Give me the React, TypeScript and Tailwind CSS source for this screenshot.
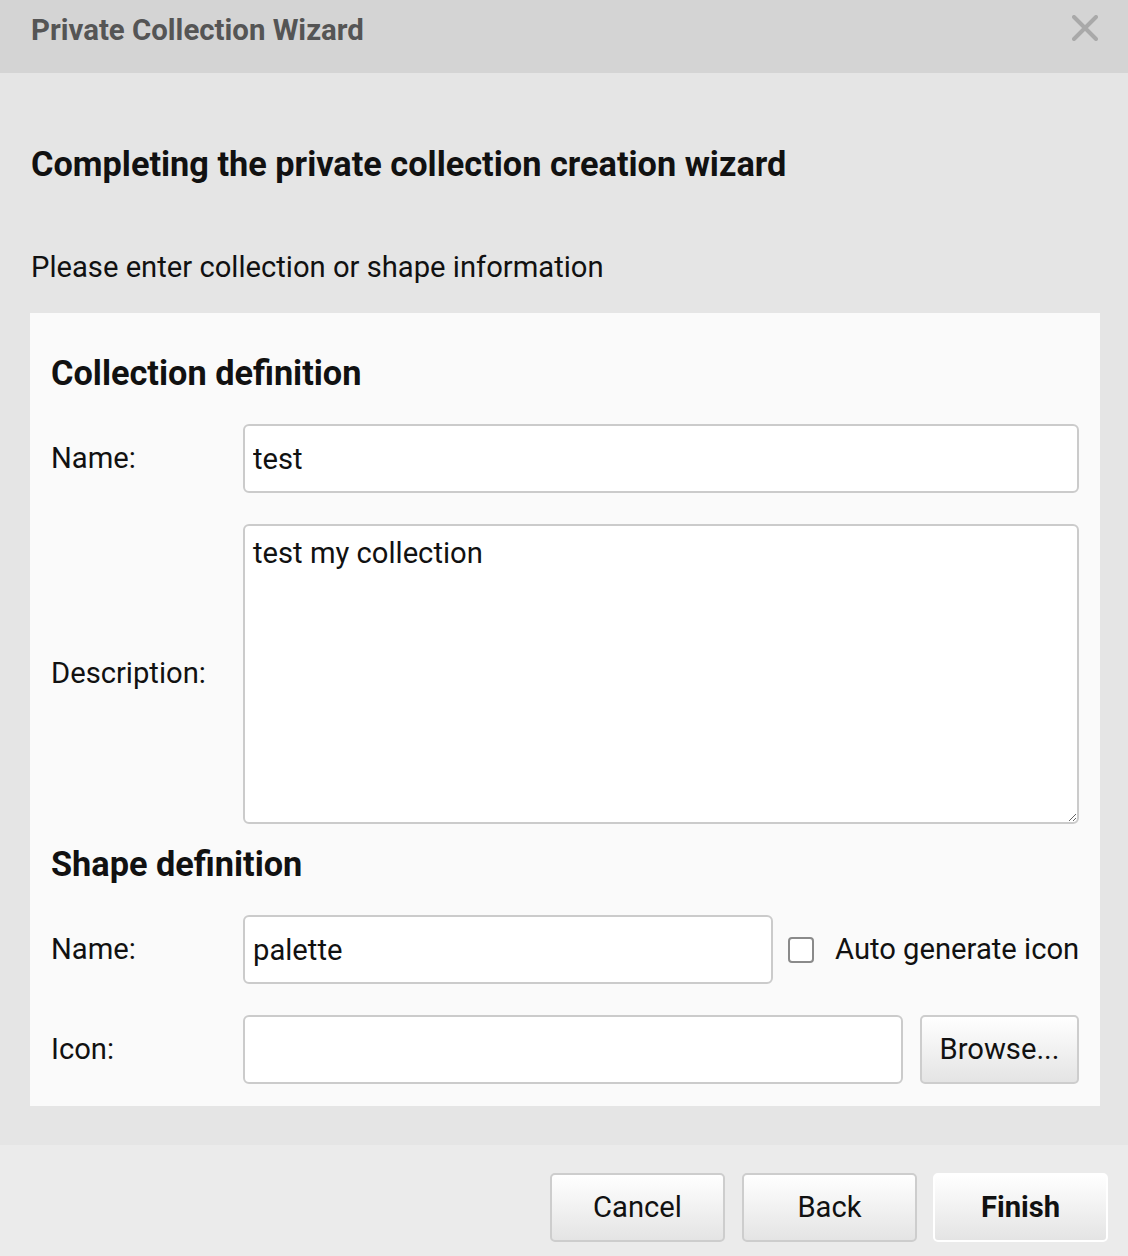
import React from "react";

const font = { fontFamily: "Roboto, 'Liberation Sans', sans-serif" };

function Field({ label, children }: { label: string; children: React.ReactNode }) {
  return (
    <div className="flex items-center">
      <div className="w-[192px] shrink-0 text-[29.2px] text-[#111]">{label}</div>
      {children}
    </div>
  );
}

const inputCls =
  "h-[69px] rounded-[6px] border-2 border-[#cbcbcb] bg-white px-[8px] text-[29.2px] text-[#111] outline-none";

const btnCls =
  "h-[69px] rounded-[5px] border-2 border-[#cdcdcd] bg-gradient-to-b from-white to-[#e4e4e4] text-[29.2px] text-[#111]";

export default function App() {
  return (
    <div style={font} className="w-[1128px] h-[1256px] flex flex-col bg-[#e5e5e5] overflow-hidden">
      <div className="h-[73px] shrink-0 bg-[#d4d4d4] flex items-start justify-between pl-[31px] pr-[30px] pt-[14px]">
        <h2 className="text-[29.4px] font-bold text-[#555] leading-[32px]">Private Collection Wizard</h2>
        <svg width="26" height="26" viewBox="0 0 26 26" className="mt-[1px]">
          <path d="M2 2 L24 24 M24 2 L2 24" stroke="#a9a9a9" strokeWidth="4" strokeLinecap="round" />
        </svg>
      </div>

      <div className="flex-1 pl-[30px] pr-[28px]">
        <h1 className="pl-[1px] mt-[71px] text-[34.3px] font-bold leading-[40px] text-[#111]">
          Completing the private collection creation wizard
        </h1>
        <p className="pl-[1px] mt-[65px] text-[29.2px] leading-[36px] text-[#111]">
          Please enter collection or shape information
        </p>

        <div className="mt-[28px] bg-[#fafafa] px-[21px] pt-[40px] pb-[22px]">
          <h3 className="text-[34.3px] font-bold leading-[40px] text-[#111]">Collection definition</h3>
          <div className="mt-[31px] flex flex-col gap-[31px]">
            <Field label="Name:">
              <input className={`${inputCls} flex-1`} defaultValue="test" />
            </Field>
            <Field label="Description:">
              <textarea
                className="flex-1 h-[300px] rounded-[6px] border-2 border-[#cbcbcb] bg-white px-[8px] py-[9px] text-[29.2px] leading-[36px] text-[#111] outline-none"
                defaultValue="test my collection"
              />
            </Field>
          </div>

          <h3 className="mt-[20px] text-[34.3px] font-bold leading-[40px] text-[#111]">Shape definition</h3>
          <div className="mt-[31px] flex flex-col gap-[31px]">
            <Field label="Name:">
              <input className={`${inputCls} w-[530px] shrink-0`} defaultValue="palette" />
              <div className="ml-[15px] shrink-0 w-[26px] h-[26px] rounded-[4px] border-2 border-[#8a8a8a] bg-white" />
              <span className="ml-[21px] whitespace-nowrap text-[29.2px] text-[#111]">Auto generate icon</span>
            </Field>
            <Field label="Icon:">
              <input className={`${inputCls} flex-1 min-w-0`} defaultValue="" />
              <button className={`${btnCls} shrink-0 ml-[17px] w-[159px]`}>Browse...</button>
            </Field>
          </div>
        </div>
      </div>

      <div className="h-[111px] shrink-0 bg-[#ebebeb] flex items-start justify-end pr-[20px] pt-[28px]">
        <button className={`${btnCls} w-[175px]`}>Cancel</button>
        <button className={`${btnCls} w-[175px] ml-[17px]`}>Back</button>
        <button className="ml-[16px] h-[69px] w-[175px] rounded-[5px] border-2 border-white bg-gradient-to-b from-white to-[#e4e4e4] text-[29.2px] font-bold text-[#111]">
          Finish
        </button>
      </div>
    </div>
  );
}
